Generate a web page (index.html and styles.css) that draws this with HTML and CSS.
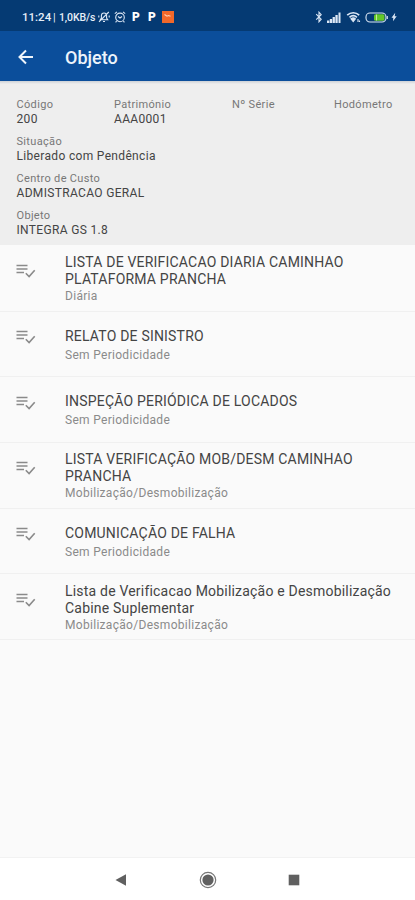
FILE: index.html
```html
<!DOCTYPE html>
<html lang="pt-BR">

<head>
	<meta charset="utf-8">
	<meta name="viewport" content="width=device-width,initial-scale=1">
	<title>Objeto</title>
	<link rel="stylesheet" href="styles.css">
</head>

<body>
	<svg class="defs" width="0" height="0">
		<symbol id="check-list" viewBox="0 0 20 14">
			<path d="M0.500 1.500h11M0.500 5h11M0.500 8.500h7.500" stroke-width="1.5" />
			<path d="M9.800 9.200l3.300 3.300 5.600-6.200" stroke-width="1.6" />
		</symbol>
	</svg>
	<div class="statusbar">
		<div class="status-left">
			<span class="clock">11:24</span>
			<span class="sep">|</span>
			<span class="speed">1,0KB/s</span>
			<svg class="i-mute" width="12" height="12" viewBox="0 0 12 12">
				<path d="M2.300 8.700h7.400L8.600 7V4.800C8.600 3 7.600 2 6 2S3.400 3 3.400 4.800V7zM5 10.500h2M1 10.800L10.800 1M.8 4.500v2M11.200 4.500v2" />
			</svg>
			<svg class="i-alarm" width="12" height="12" viewBox="0 0 12 12">
				<circle cx="6" cy="6.400" r="4.300" />
				<path d="M.8 2.600L3 .9M9 .9l2.200 1.700M4 5.500l2 1.500 2-1.500M2.600 10l-1 1.300M9.400 10l1 1.300" />
			</svg>
			<b class="park">P</b>
			<b class="park">P</b>
			<svg class="i-app" width="12" height="12" viewBox="0 0 12 12">
				<path class="app-bg" d="M0 0h12v12H0z" />
				<path class="app-mark" d="M2.500 3.500l2.500 1.700 1.500-.7 2 .8" />
			</svg>
		</div>
		<div class="status-right">
			<svg width="8" height="12" viewBox="0 0 8 12">
				<path d="M1.200 3.200l5 5L4 10.800V1.200l2.200 2.500-5 5" />
			</svg>
			<svg class="fill i-signal" width="14" height="11" viewBox="0 0 14 11">
				<path d="M0 8.500h2.300V11H0zM2.800 7h2.300v4H2.800zM5.600 5h2.300v6H5.600zM8.400 3h2.300v8H8.400zM11.500.5h2V11h-2z" />
			</svg>
			<svg class="i-wifi" width="15" height="12" viewBox="0 0 15 12">
				<path d="M1.200 4.200c3.500-3.300 8.600-3.300 12 0M3.500 6.300c2.200-2 5.200-2 7.400 0" stroke-width="1.700" />
				<path d="M5 7.800c1.500-1.200 3-1.200 4.400 0L7.200 10.600zM12 8v3M13.500 9.500v1.500" fill="#dce7f5" />
			</svg>
			<svg class="i-battery" width="23" height="11" viewBox="0 0 23 11">
				<rect x="1" y="1" width="20" height="9" rx="4" />
				<path d="M22.300 4v3" />
				<rect x="9" y="2.300" width="10.500" height="6.400" rx="1.500" fill="#63c728" stroke="none" />
				<path d="M11.500 2.500v6" stroke="#c5ec9c" />
			</svg>
			<svg class="fill i-bolt" width="6" height="10" viewBox="0 0 6 10">
				<path d="M4.200 .8L.5 5.800h1.800L2 9.200l3.700-5H3.700z" />
			</svg>
		</div>
	</div>

	<div class="appbar">
		<svg class="back" width="16" height="16" viewBox="0 0 16 16">
			<path d="M15 8H2M8 1.500L1.500 8 8 14.500" />
		</svg>
		<h1>Objeto</h1>
	</div>

	<div class="info">
		<div class="info-row">
			<div class="field"><label>Código</label><span>200</span></div>
			<div class="field"><label>Património</label><span>AAA0001</span></div>
			<div class="field"><label>Nº Série</label></div>
			<div class="field"><label>Hodómetro</label></div>
		</div>
		<div class="field"><label>Situação</label><span>Liberado com Pendência</span></div>
		<div class="field"><label>Centro de Custo</label><span>ADMISTRACAO GERAL</span></div>
		<div class="field"><label>Objeto</label><span>INTEGRA GS 1.8</span></div>
	</div>

	<ul class="list">
		<li class="item">
			<svg class="check"><use href="#check-list" /></svg>
			<div class="text">
				<div class="title">LISTA DE VERIFICACAO DIARIA CAMINHAO<br>PLATAFORMA PRANCHA</div>
				<div class="sub">Diária</div>
			</div>
		</li>
		<li class="item single">
			<svg class="check"><use href="#check-list" /></svg>
			<div class="text">
				<div class="title">RELATO DE SINISTRO</div>
				<div class="sub">Sem Periodicidade</div>
			</div>
		</li>
		<li class="item single">
			<svg class="check"><use href="#check-list" /></svg>
			<div class="text">
				<div class="title">INSPEÇÃO PERIÓDICA DE LOCADOS</div>
				<div class="sub">Sem Periodicidade</div>
			</div>
		</li>
		<li class="item">
			<svg class="check"><use href="#check-list" /></svg>
			<div class="text">
				<div class="title">LISTA VERIFICAÇÃO MOB/DESM CAMINHAO<br>PRANCHA</div>
				<div class="sub">Mobilização/Desmobilização</div>
			</div>
		</li>
		<li class="item single">
			<svg class="check"><use href="#check-list" /></svg>
			<div class="text">
				<div class="title">COMUNICAÇÃO DE FALHA</div>
				<div class="sub">Sem Periodicidade</div>
			</div>
		</li>
		<li class="item">
			<svg class="check"><use href="#check-list" /></svg>
			<div class="text">
				<div class="title">Lista de Verificacao Mobilização e Desmobilização<br>Cabine Suplementar</div>
				<div class="sub">Mobilização/Desmobilização</div>
			</div>
		</li>
	</ul>

	<div class="navbar">
		<svg width="18" height="18" viewBox="0 0 18 18"><path d="M3.500 9L14 3.300v11.400z" /></svg>
		<svg width="18" height="18" viewBox="0 0 18 18">
			<circle cx="9" cy="9" r="7.700" fill="none" stroke="#777" stroke-width="1.200" />
			<circle cx="9" cy="9" r="5.600" />
		</svg>
		<svg width="18" height="18" viewBox="0 0 18 18"><path d="M3.700 3.700h10.600v10.600H3.700z" /></svg>
	</div>
</body>

</html>
```
FILE: styles.css
```css
* {
	box-sizing: border-box;
}

body {
	margin: 0;
	height: 900px;
	display: flex;
	flex-direction: column;
	overflow: hidden;
	font-family: Roboto, "Liberation Sans", sans-serif;
	background: #fafafa;
}

svg {
	display: block;
	flex: none;
}

.defs {
	position: absolute;
}

.statusbar {
	height: 31px;
	padding: 3px 18px 0 22px;
	display: flex;
	align-items: center;
	justify-content: space-between;
	background: #053a73;
	color: #e6eef8;
}

.statusbar svg {
	fill: none;
	stroke: #dce7f5;
	stroke-width: 1.1;
}

.statusbar svg.fill {
	fill: #dce7f5;
	stroke: none;
}

.statusbar .app-bg {
	fill: #f1682a;
	stroke: none;
}

.statusbar .app-mark {
	stroke: #ffd0b5;
}

.status-left,
.status-right {
	display: flex;
	align-items: center;
}

.clock {
	width: 31px;
	font-size: 11.5px;
	font-weight: 500;
}

.sep {
	width: 6px;
	font-size: 11px;
}

.speed {
	width: 39px;
	font-size: 10.5px;
	font-weight: 500;
	letter-spacing: -0.1px;
}

.i-alarm {
	margin-left: 4px;
}

.park {
	width: 7px;
	margin-left: 6px;
	font-size: 12px;
	font-weight: 900;
	color: #fff;
}

.park + .park {
	margin-left: 9px;
}

.i-app {
	margin-left: 7px;
}

.i-signal {
	margin-left: 4px;
}

.i-wifi {
	margin-left: 5px;
}

.i-battery {
	margin-left: 4px;
}

.i-bolt {
	margin-left: 3px;
}

.appbar {
	height: 50px;
	padding: 2px 18px 0;
	display: flex;
	align-items: center;
	background: #0b4e9b;
}

.back {
	fill: none;
	stroke: #eef4fb;
	stroke-width: 2;
}

.appbar h1 {
	margin: 0 0 0 31px;
	font-size: 18px;
	font-weight: 500;
	color: #eef4fb;
}

.info {
	height: 164px;
	padding: 17px 16.5px 0;
	display: flex;
	flex-direction: column;
	gap: 9px;
	background: linear-gradient(#cdd1d6, #eee 3px);
}

.info-row {
	display: grid;
	grid-template-columns: 97.5px 118px 102px auto;
}

.field {
	font-size: 12px;
	line-height: 14px;
	letter-spacing: 0.33px;
	white-space: nowrap;
	color: #444;
}

.field label {
	display: block;
	font-size: 11px;
	color: #777;
}

.field span {
	display: block;
}

.list {
	flex: 1;
	margin: 0;
	padding: 1px 0 0;
	list-style: none;
}

.item {
	height: 65.7px;
	padding-left: 16px;
	display: flex;
	align-items: center;
	border-bottom: 1px solid #f0f0f0;
}

.check {
	width: 20px;
	height: 14px;
	margin: 0 29px 14px 0;
	fill: none;
	stroke: #8a8a8a;
}

.text {
	padding-top: 2px;
}

.title {
	font-size: 14px;
	line-height: 17px;
	letter-spacing: 0.2px;
	white-space: nowrap;
	color: #444;
}

.sub {
	font-size: 12px;
	line-height: 16px;
	letter-spacing: 0.3px;
	color: #8a8a8a;
}

.single .sub {
	margin-top: 2px;
}

.navbar {
	height: 43px;
	padding: 1px 112px 0;
	display: flex;
	align-items: center;
	justify-content: space-between;
	background: #fff;
	border-top: 1px solid #f2f2f2;
	fill: #606060;
}
```
